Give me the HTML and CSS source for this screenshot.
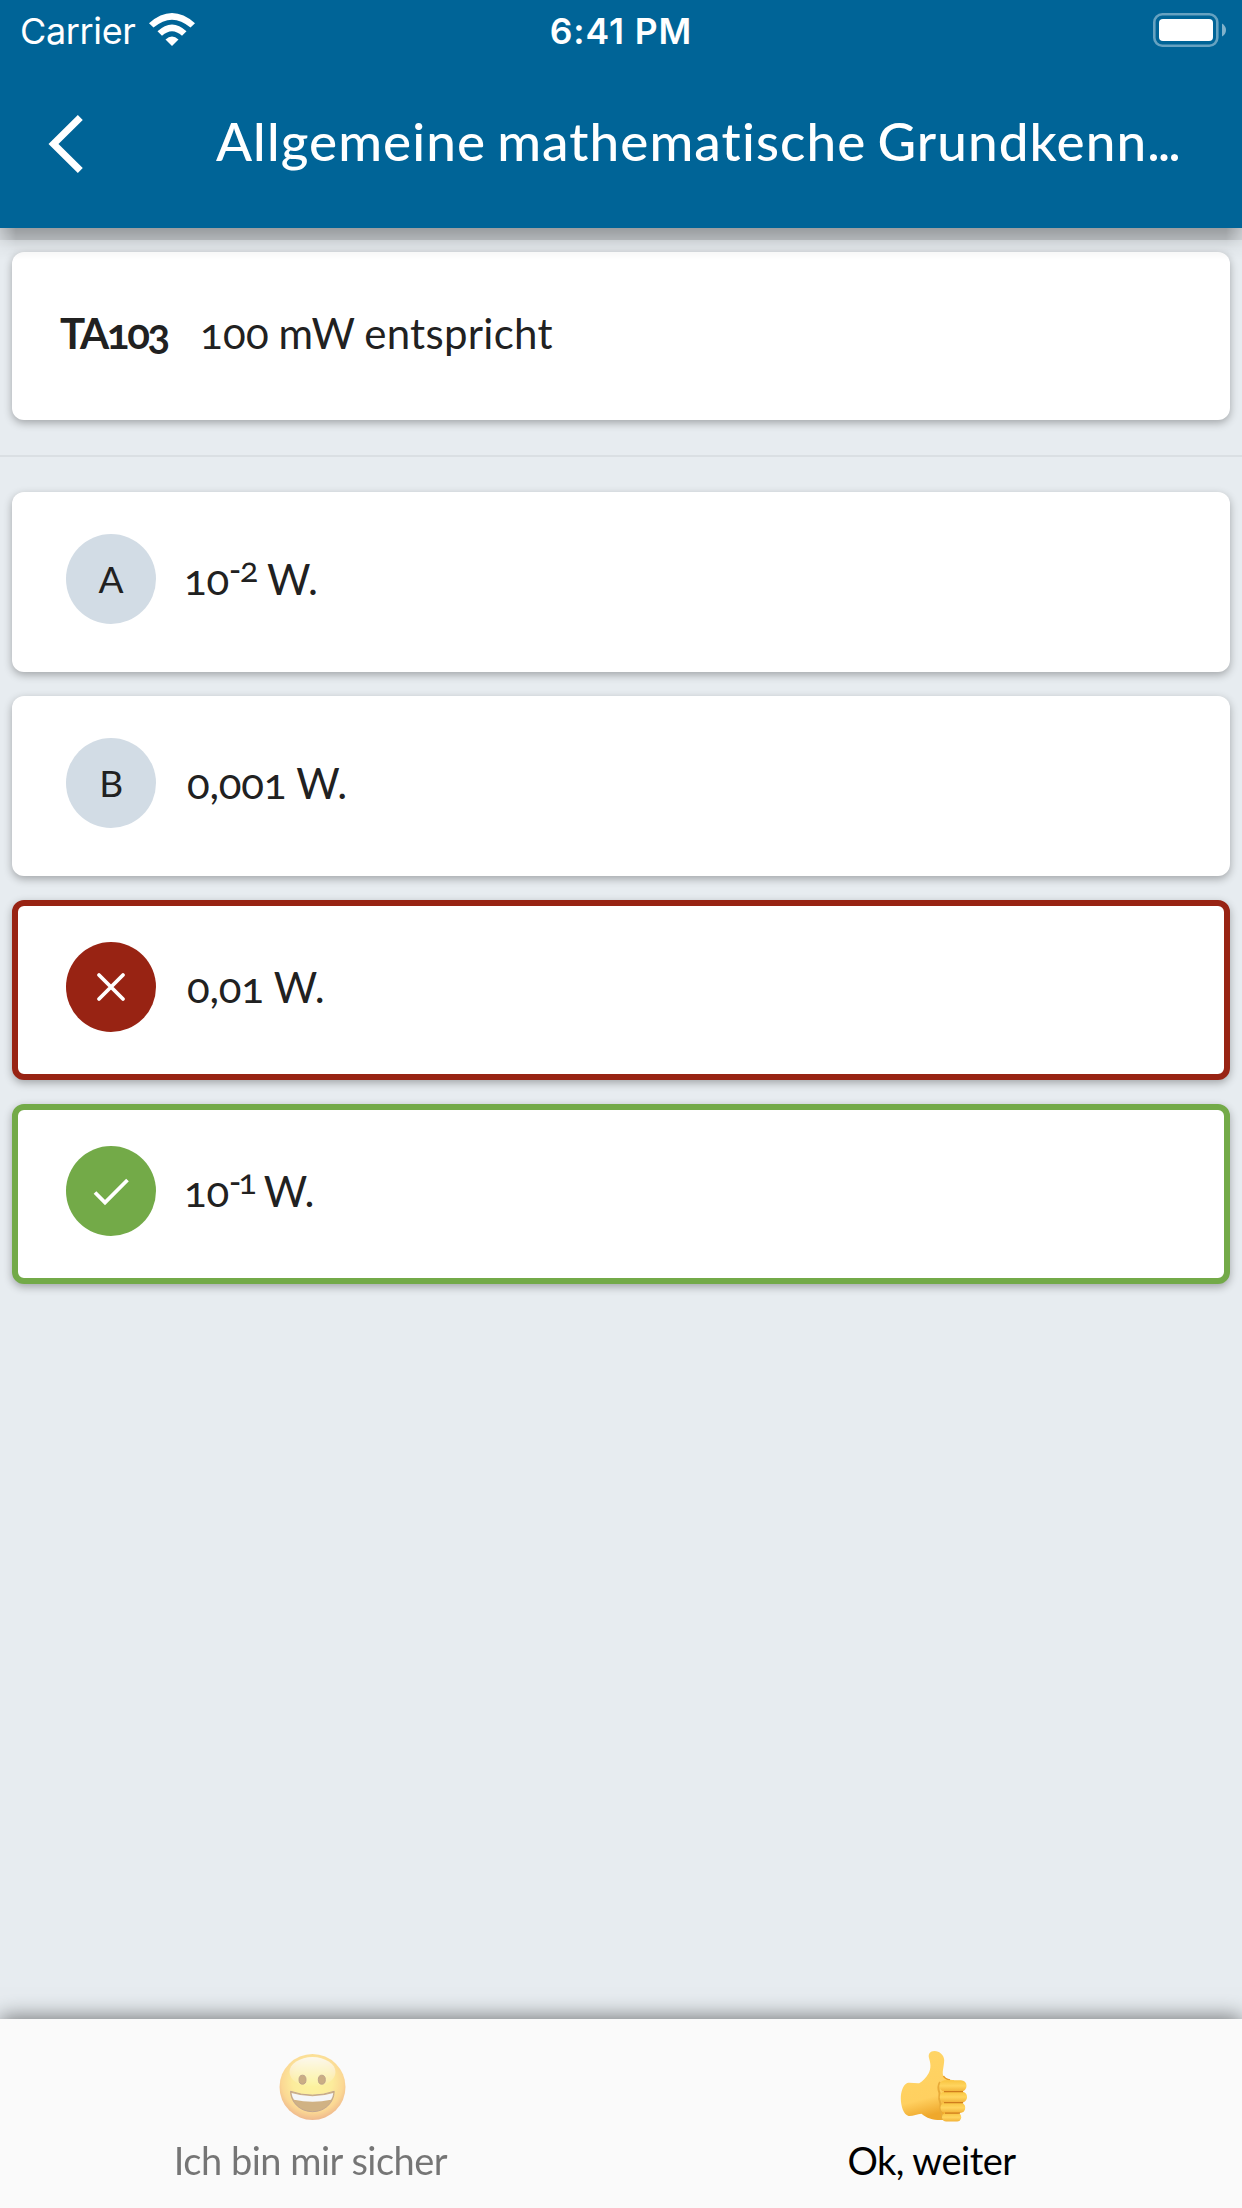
FILE: index.html
```html
<!DOCTYPE html>
<html lang="de">
<head>
<meta charset="utf-8">
<title>Allgemeine mathematische Grundkenntnisse</title>
<link rel="stylesheet" href="styles.css">
</head>
<body>
<header class="app-header">
  <div class="status-bar">
    <div class="carrier"><span class="carrier-name">Carrier</span>
      <svg class="wifi" viewBox="0 0 46 34"><path d="M0 10.200Q23-10.200 46 10.200L41.500 14.600Q23-1.300 4.500 14.600Z"/><path d="M8.500 18.300Q23 4.500 37.500 18.300L33 22.800Q23 13.500 13 22.800Z"/><path d="M16.500 26.400Q23 20.400 29.500 26.400L23 33Z"/></svg>
    </div>
    <span class="clock">6:41 PM</span>
    <svg class="battery" viewBox="0 0 73 34"><rect x="1.300" y="1.300" width="63" height="31.400" rx="8" fill="none" stroke="#66a2c1" stroke-width="2.600"/><rect x="6" y="6" width="54" height="22" rx="4" fill="#fff"/><path d="M69 10.500Q73 13 73 17T69 23.500Z" fill="#80b2cb"/></svg>
  </div>
  <div class="nav-bar">
    <svg class="back" viewBox="0 0 36 60"><path d="M32.300 3.500L5.500 30L32.300 56.500" fill="none" stroke="#fff" stroke-width="7"/></svg>
    <h1 class="title">Allgemeine mathematische Grundkenn<span class="dots">...</span></h1>
  </div>
</header>
<main class="content">
  <section class="card question"><b class="code">TA103</b><span class="question-text">100 mW entspricht</span></section>
  <hr class="divider">
  <div class="answers">
    <div class="card answer"><span class="badge">A</span><span class="answer-text power">10<sup>-2</sup> W.</span></div>
    <div class="card answer"><span class="badge">B</span><span class="answer-text">0,001 W.</span></div>
    <div class="card answer wrong"><span class="badge"><svg viewBox="0 0 90 90"><path d="M33 33L57 57M57 33L33 57" stroke-linecap="round"/></svg></span><span class="answer-text">0,01 W.</span></div>
    <div class="card answer correct"><span class="badge"><svg viewBox="0 0 90 90"><path d="M29 46.500L39 56.500L61.500 34"/></svg></span><span class="answer-text power power-one">10<sup>-1</sup> W.</span></div>
  </div>
</main>
<footer class="actions">
  <div class="action muted">
    <svg class="emoji" viewBox="0 0 72 74">
      <defs>
        <radialGradient id="face" cx=".5" cy=".42" r=".6"><stop offset="0" stop-color="#fff04f"/><stop offset=".5" stop-color="#ffe04a"/><stop offset=".78" stop-color="#fcb93a"/><stop offset="1" stop-color="#e2752c"/></radialGradient>
        <linearGradient id="gloss" x1="0" y1="0" x2="0" y2="1"><stop offset="0" stop-color="#fff" stop-opacity=".85"/><stop offset="1" stop-color="#fff" stop-opacity="0"/></linearGradient>
      </defs>
      <circle cx="37.500" cy="38" r="33" fill="url(#face)"/>
      <ellipse cx="37.500" cy="23" rx="23" ry="15" fill="url(#gloss)"/>
      <g fill="#a06a1c" stroke="#8a5728"><ellipse cx="27.500" cy="30.700" rx="3.500" ry="4.500"/><ellipse cx="46.800" cy="30.700" rx="3.500" ry="4.500"/></g>
      <path d="M15.500 42.300Q37.500 50 59.200 42.300C59 54 49.500 62.700 37.500 62.700S16 54 15.500 42.300Z" fill="#ac731d" stroke="#8d5a33"/>
      <path d="M16.500 44Q37.500 50.500 58.300 44Q57.700 48.500 56 50.800Q37.500 54.500 19 50.800Q17.200 48.500 16.500 44Z" fill="#f1f4f8"/>
    </svg>
    <span class="label">Ich bin mir sicher</span>
  </div>
  <div class="action">
    <svg class="emoji" viewBox="0 0 72 74">
      <defs>
        <linearGradient id="hand" x1="0" y1="0" x2=".2" y2="1"><stop offset="0" stop-color="#ffd565"/><stop offset=".75" stop-color="#ffd060"/><stop offset="1" stop-color="#efa82c"/></linearGradient>
        <linearGradient id="finger" x1="0" y1="0" x2="0" y2="1"><stop offset="0" stop-color="#f9c440"/><stop offset=".5" stop-color="#ffd55f"/><stop offset="1" stop-color="#f3b238"/></linearGradient>
      </defs>
      <path d="M38.500 2C34 2 32 5 33 9C34.500 14 35.500 19 32.500 24.500C30 29 26 32.500 23.200 34.300C19 34.500 15 33.500 11.200 34C7 36 4.800 43 4.800 49.300C4.800 57 7.500 65.500 12.500 67C17 67.300 21 65 25.500 64.700C31 69.500 38 71.500 47 71L57 50L58 31C54 31.300 50 30 47.500 27C45.500 24 48.200 17 48.200 11C48 6 43.500 2 38.500 2Z" fill="url(#hand)"/>
      <path d="M47.500 27Q49 30 54 31" fill="none" stroke="#e79b23" stroke-width="1.500"/>
      <path d="M44 33Q41 38 43.500 44Q42.500 50 44.500 55Q43.500 61 46 66L46 71" fill="none" stroke="#e8aa38" stroke-width="2"/>
      <g fill="url(#finger)"><rect x="46" y="64" width="19.200" height="8.500" rx="4.200"/><rect x="44.500" y="53.500" width="24.700" height="10.500" rx="5"/><rect x="43.800" y="42.500" width="27.200" height="11" rx="5.300"/><rect x="43.500" y="31.200" width="27" height="11.300" rx="5.500"/></g>
      <path d="M48 42.600H67M48 53.600H67M49 64.200H64" stroke="#cf7c1d" stroke-width="1.200"/>
    </svg>
    <span class="label">Ok, weiter</span>
  </div>
</footer>
</body>
</html>
```
FILE: styles.css
```css
* { box-sizing: border-box; }
body { margin: 0; width: 1242px; height: 2208px; display: flex; flex-direction: column; background: #e7ecf0; color: #212121; font-family: Lato, "Liberation Sans", sans-serif; font-variant-numeric: oldstyle-nums; overflow: hidden; }
.app-header { position: relative; height: 228px; flex: none; background: #006497; color: #fff; }
.app-header::after { content: ""; position: absolute; left: 0; right: 0; top: 100%; height: 36px; pointer-events: none;
  background: linear-gradient(rgba(0,0,0,.335) 0, rgba(0,0,0,.235) 12px, rgba(0,0,0,.115) 12px, rgba(0,0,0,.045) 20px, rgba(0,0,0,.02) 26px, transparent 32px);
  -webkit-mask-image: linear-gradient(90deg, rgba(0,0,0,.5), #000 16px, #000 calc(100% - 16px), rgba(0,0,0,.5));
  mask-image: linear-gradient(90deg, rgba(0,0,0,.5), #000 16px, #000 calc(100% - 16px), rgba(0,0,0,.5)); }
.status-bar { height: 60px; display: grid; grid-template-columns: 1fr auto 1fr; padding: 9px 16px 0; font: 36px/44px Inter, sans-serif; }
.carrier { display: flex; gap: 14px; padding-left: 4px; }
.carrier-name { width: 115px; letter-spacing: -.35px; }
.wifi { width: 46px; height: 34px; margin-top: 4px; fill: #fff; }
.clock { font-weight: 600; font-size: 35.5px; line-height: 46px; letter-spacing: .9px; }
.battery { justify-self: end; width: 73px; height: 34px; margin-top: 4px; }
.nav-bar { height: 168px; display: flex; align-items: center; padding-left: 48px; }
.back { width: 36px; height: 60px; }
.title { margin: 0 0 7px 132px; font-size: 53px; font-weight: 500; letter-spacing: 1.1px; word-spacing: -3.5px; white-space: nowrap; }
.dots { letter-spacing: -2px; }
.content { flex: 1; padding-top: 24px; }
.card { margin: 0 12px; background: #fff; border-radius: 12px; box-shadow: 0 3px 9px rgba(0,0,0,.3); display: flex; align-items: center; }
.question { height: 168px; padding: 0 48px 6px; font-size: 42px; }
.code { width: 140px; font-weight: 700; letter-spacing: -2.3px; }
.question-text { letter-spacing: .3px; word-spacing: -1.5px; }
.divider { height: 2px; border: 0; margin: 35px 0; background: #dadfe3; }
.answers { display: grid; gap: 24px; }
.answer { height: 180px; padding: 0 54px 7px; gap: 30px; font-size: 42px; letter-spacing: -.2px; }
.answer-text { padding-left: 1px; }
.power { padding-left: 0; margin-left: -2px; letter-spacing: -.3px; }
.answer sup { font-size: 34px; line-height: 0; vertical-align: 13px; letter-spacing: -1.3px; }
.power-one sup { letter-spacing: -3px; }
.badge { width: 90px; height: 90px; border-radius: 50%; background: #d2dce5; display: grid; place-items: center; padding-bottom: 1px; font-size: 37px; }
.badge svg { width: 90px; height: 90px; }
.badge path { fill: none; stroke: #fff; stroke-width: 3.800; }
.wrong { border: 6px solid #982313; padding: 0 48px 6px; }
.wrong .badge { background: #982313; padding: 0; }
.correct { border: 6px solid #73aa48; padding: 0 48px 6px; }
.correct .badge { background: #73aa48; padding: 0; }
.actions { height: 189px; flex: none; display: grid; grid-template-columns: 1fr 1fr; background: #fafafa; color: #000; box-shadow: 0 -2px 20px rgba(0,0,0,.5); }
.action { display: flex; flex-direction: column; align-items: center; padding-top: 30px; font-size: 38px; line-height: 46px; }
.emoji { width: 72px; height: 74px; margin-bottom: 14px; }
.label { letter-spacing: -.5px; }
.muted { opacity: .53; }
```
